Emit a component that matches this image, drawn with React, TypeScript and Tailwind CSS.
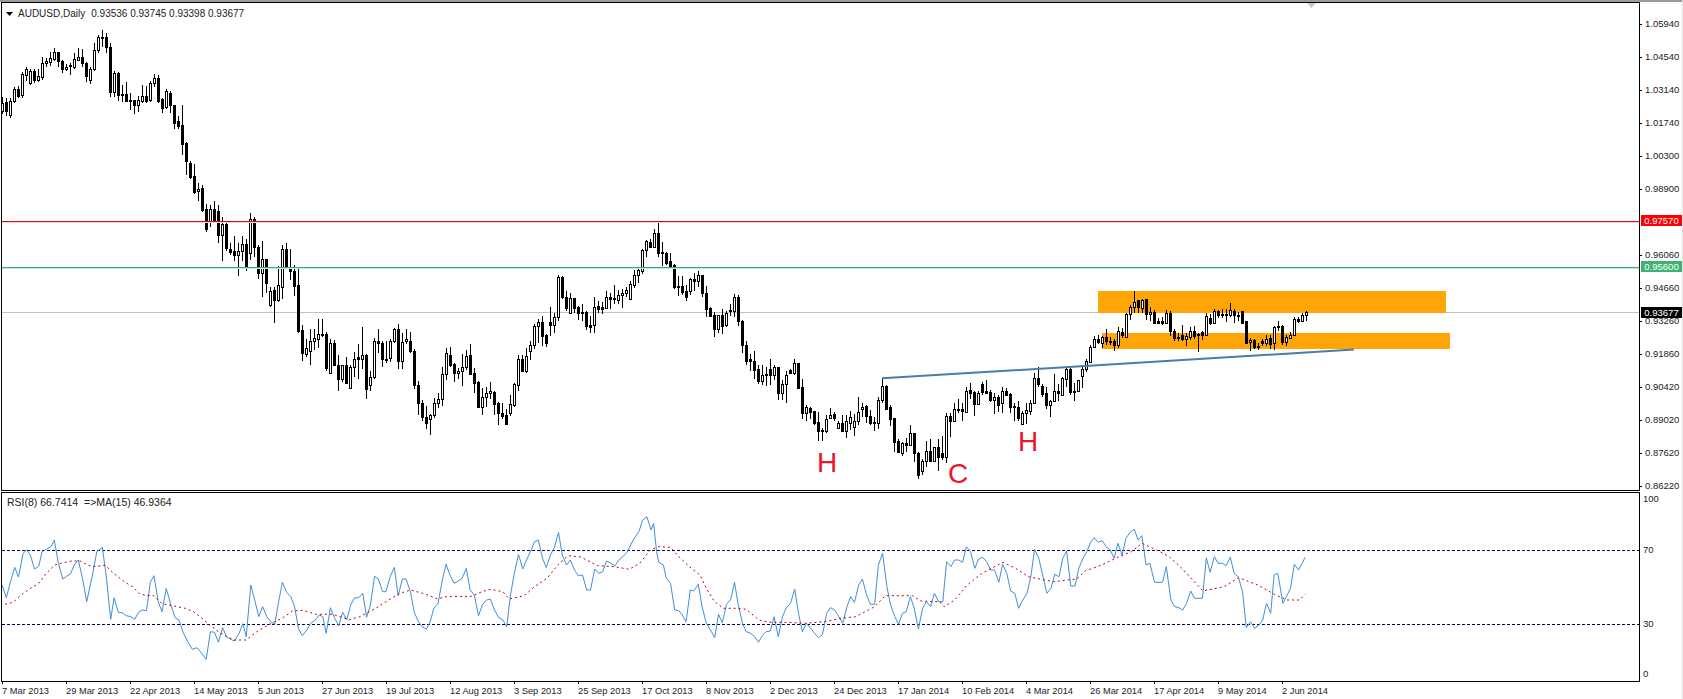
type C = [number, number, number, number, number];

const seg1: C[] = [
[218,242,200,252,1],[216,242,205,258,0],[212,254,205,264,1],[178,212,170,218,1],[178,198,168,205,0],[133,196,125,205,1],[118,134,112,152,1],[124,160,118,165,1],[122,150,116,158,0],[138,150,118,156,1],
[100,140,82,150,1],[94,100,84,112,1],[85,95,66,108,1],[67,86,55,94,1],[67,94,65,112,0],[94,118,90,128,0],[112,118,102,124,1],[106,108,100,135,0],[88,110,68,118,1],[82,90,55,94,1],
[82,100,58,112,0],[98,138,95,155,0],[116,150,110,162,1],[60,116,40,122,1],[22,60,15,70,1],[22,24,0,50,0],[22,52,8,68,0],[52,185,38,200,0],[130,185,122,200,1],[130,196,125,212,0],
[192,196,165,215,0],[192,212,155,212,0],[210,212,188,240,0],[210,224,210,252,0],[210,224,198,245,1],[198,212,166,220,1],[198,212,168,218,0],[158,210,152,215,1],[144,160,132,170,1],[144,212,136,218,0],
[208,234,205,248,0],[184,230,178,238,1],[188,226,184,250,0],[226,278,226,296,0],[274,288,258,298,0],[286,342,226,374,0],[338,392,336,434,0],[400,442,392,446,0],[438,486,402,492,0],[476,484,460,514,1],
[474,540,466,546,0],[538,598,522,606,0],[538,576,526,590,1],[538,574,514,578,0],[544,616,526,640,0],[582,616,560,692,1],[582,654,576,662,0],[658,666,640,676,0],[664,676,618,692,0],[662,676,640,738,1],
[642,664,618,692,1],[642,710,628,722,0],[566,670,550,690,1],[566,650,562,680,0],[652,728,645,748,0],[688,728,634,802,1],[688,758,688,788,0],[782,826,770,830,1],[780,810,772,878,0],[766,810,708,815,1],
[658,770,646,806,1],[658,712,640,716,0],[712,724,656,750,0],[724,768,704,798,0],[766,904,714,908,0],[900,970,886,992,0],[955,972,926,980,1],[934,962,898,1004,1],[925,934,896,960,1],[912,926,866,955,1],
[912,914,868,922,0],[912,1014,905,1024,0],[940,1028,928,1030,1],[940,1006,930,1008,0],[1006,1046,975,1082,0],[1006,1046,1004,1055,1],[1006,1060,980,1062,0],[1012,1074,1006,1078,1],[986,1012,965,1040,1],[982,988,942,1048,0],
[976,988,892,1018,1],[976,1076,972,1108,0],[1040,1064,1022,1082,1],[932,1040,924,1048,1],[932,940,898,970,0],[938,988,932,1010,0],[986,988,934,998,0],[932,984,928,995,1],[898,932,894,940,1],[898,994,882,1016,0],
[936,994,908,1016,1],[926,934,898,942,1],[932,964,905,970,0],[962,1064,958,1076,0],[1064,1120,1052,1154,0],[1120,1160,1110,1172,0],[1160,1178,1128,1198,0],[1156,1166,1152,1214,1],[1118,1156,1104,1164,1],[1108,1120,1090,1135,1],
];

const seg2: C[] = [
[492,568,470,588,1],[428,492,414,510,1],[436,466,412,472,0],[462,488,460,516,0],[482,488,474,508,1],[470,482,432,528,1],[438,470,420,480,1],[436,492,402,496,0],[490,518,474,548,0],[516,592,514,594,0],
[562,590,534,614,1],[550,562,532,590,1],[544,550,516,566,1],[546,582,544,614,0],[578,608,576,644,0],[608,618,580,628,0],[616,642,596,644,0],[582,608,556,618,1],[522,584,518,590,1],[446,524,436,542,1],
[446,484,436,486,0],[438,484,414,488,1],[406,424,394,450,1],[348,406,342,416,1],[336,348,326,400,1],[336,378,318,408,0],[374,398,372,410,0],[336,344,292,378,0],[320,344,310,368,1],[202,320,196,332,1],
[202,260,198,268,0],[260,294,244,302,0],[264,310,250,312,1],[264,294,264,308,0],[292,310,288,330,0],[306,310,282,334,0],[306,348,304,360,0],[346,350,318,370,0],[290,344,262,368,1],[288,296,272,310,0],
[292,296,275,312,0],[262,294,242,296,1],[262,266,248,296,0],[264,268,224,282,0],[256,270,240,282,1],[250,256,238,294,1],[240,250,230,260,1],[222,268,212,270,1],[196,224,180,234,1],[180,196,174,218,1],
[120,182,118,192,1],[92,120,90,142,1],[96,110,88,114,0],[70,110,56,114,1],[70,128,34,142,0],[126,130,96,168,0],[128,158,126,166,0],[154,168,128,176,0],[166,230,162,236,0],[228,232,198,258,0],
[228,246,198,254,0],[244,260,224,272,0],[208,244,204,254,1],[208,212,190,244,0],[196,212,184,230,1],[196,248,194,260,0],[248,296,228,322,0],[294,318,290,322,0],[316,356,306,380,0],[316,356,314,370,1],
[316,348,296,372,0],[310,346,302,350,1],[300,304,282,318,0],[262,302,252,320,1],[262,332,254,348,0],[332,404,330,430,0],[404,452,392,466,0],[448,454,432,482,0],[454,480,424,506,0],[478,512,466,522,0],
[496,514,464,524,1],[492,496,472,528,0],[478,494,448,526,0],[472,494,464,510,1],[470,548,470,570,0],[522,548,510,570,1],[496,522,484,578,1],[480,490,476,492,0],[460,490,448,494,1],[460,534,460,536,0],
[532,610,508,626,0],[592,610,586,632,1],[594,606,590,628,0],[604,638,602,646,0],[636,664,606,692,0],[660,664,654,692,0],[626,664,614,668,1],[614,624,594,626,1],[612,624,606,632,0],[640,654,632,658,1],
[640,662,616,666,0],[634,664,616,684,1],[620,638,602,660,1],[632,650,612,678,1],[606,632,562,644,1],[590,596,580,622,1],[588,618,584,640,0],[618,638,600,644,0],[636,638,622,662,0],[570,638,562,656,1],
];

const seg3: C[] = [
[348,390,326,398,1],[348,416,345,418,0],[412,446,406,468,0],[444,516,444,546,0],[514,546,506,548,0],[518,548,516,558,1],[520,524,504,546,0],[490,524,466,526,1],[490,550,488,576,0],[548,614,546,626,0],
[572,604,566,616,1],[542,572,514,590,1],[542,572,508,574,0],[532,572,530,576,1],[532,560,506,602,0],[550,562,498,570,0],[438,562,430,578,1],[438,452,428,500,0],[416,452,400,452,1],[416,420,388,430,0],
[418,424,400,452,0],[362,426,352,428,1],[360,368,340,386,0],[366,402,364,438,0],[368,402,362,404,1],[342,366,336,374,0],[364,368,330,372,0],[366,390,360,396,0],[382,390,370,432,1],[380,404,376,426,0],
[364,400,352,430,1],[364,374,354,378,0],[372,410,370,430,0],[408,412,400,452,0],[410,444,394,452,0],[430,462,424,466,1],[420,430,398,462,1],[398,422,390,436,1],[324,398,308,400,1],[324,342,292,352,0],
[348,372,342,380,0],[370,404,350,416,0],[394,404,390,442,1],[362,394,312,396,1],[362,368,342,392,0],[324,374,320,376,1],[296,326,292,352,1],[296,366,294,374,0],[362,366,340,392,0],[330,362,330,364,1],
[298,318,290,354,1],[274,298,266,306,1],[232,276,226,280,1],[206,232,198,234,1],[206,216,196,222,0],[202,220,198,234,1],[202,214,176,224,0],[212,216,200,226,0],[212,224,206,242,0],[184,224,170,234,1],
[186,196,174,204,0],[132,200,128,204,1],[112,132,104,150,1],[96,112,62,128,1],[90,110,90,130,0],[90,114,88,130,1],[88,132,86,150,0],[126,132,112,152,1],[126,158,120,160,0],[154,158,144,160,0],
[154,158,142,164,0],[130,158,120,160,1],[128,184,124,198,0],[184,204,176,212,0],[202,204,190,212,0],[196,208,164,214,0],[198,206,190,228,1],[184,202,172,210,1],[184,198,168,206,0],[192,196,190,246,0],
[186,194,182,210,0],[138,196,128,198,1],[144,160,132,166,0],[124,158,118,160,1],[122,134,120,144,0],[132,136,118,144,0],[132,136,116,156,0],[120,136,100,140,1],[122,136,118,160,0],[134,138,126,152,0],
[124,158,122,158,0],[154,218,152,218,0],[210,216,204,242,1],[210,232,208,238,0],[228,232,220,240,0],[214,218,208,228,0],[206,220,196,228,1],[204,222,196,236,0],[172,220,168,240,1],[168,172,152,184,0],
[168,216,166,226,0],[202,216,194,228,1],[194,204,186,208,1],[146,194,140,198,1],[148,154,142,160,0],[136,152,128,156,1],[126,136,124,152,1],
];

const rsiA = [5,240,15,278,25,230,35,187,44,216,55,145,63,135,72,150,82,192,92,184,100,140,110,133,122,124,129,105,138,170,149,222,158,214,168,206,176,180,186,165,196,220,206,290,218,220,230,140,243,127,252,210,263,343,271,278,281,322,290,323,300,332,311,335,320,343,329,322,337,315,348,317,357,232,366,212,376,290,385,320,395,250,406,300,416,338,425,345,436,385,447,412,457,433,468,428,479,445,490,463,500,380,510,382,519,412,529,368,538,395,548,403,557,408,568,385,577,356,585,395,596,240,606,290,615,335,624,305,634,335,643,350,653,358,662,290,671,232,681,262,691,275,700,305,709,370,718,392,729,375,738,355,749,345,759,330,767,335,775,385,785,308,795,340,805,362,814,322,824,345,833,300,843,278,852,278,862,265,871,337,880,300,890,214,899,222,909,260,917,260,927,215,937,187,946,272,956,222,965,222,975,260,984,320,994,350,1003,365,1013,373,1022,350,1031,310,1041,295,1051,225,1060,178,1069,210,1079,235,1089,228,1098,220,1108,190,1117,255,1127,270,1137,332,1146,300,1156,285,1165,282,1175,315,1185,338,1195,345,1204,365,1213,270,1222,205,1232,148,1242,192,1251,165,1261,138,1270,110,1279,105,1289,160,1298,188,1308,150,1317,128,1327,82,1336,150,1346,180,1355,165,1365,195,1374,212,1384,210,1394,255,1403,255,1413,192,1423,205,1432,200,1441,168,1451,175,1461,183,1470,165,1480,155,1490,142,1499,118,1508,98,1518,80,1527,45,1537,35,1547,75,1553,55,1560,140,1565,172];
const rsiB = [8,180,15,220,25,235,35,315,45,317,53,330,62,350,72,255,80,258,91,238,100,305,110,355,120,375,130,398,139,328,148,353,158,298,168,283,177,232,186,300,196,355,205,380,215,385,225,395,234,412,244,390,252,380,262,378,271,335,281,395,291,335,300,308,310,295,320,252,329,325,338,380,348,355,358,370,367,385,377,398,386,388,396,325,405,308,415,315,425,335,434,355,444,305,453,275,462,292,472,240,481,222,491,270,500,298,510,298,519,180,529,145,539,245,548,300,558,335,567,358,576,325,585,320,595,275,604,310,614,372,624,310,633,290,643,305,652,265,662,290,672,290,681,170,691,185,700,165,709,165,719,172,728,125,738,140,748,190,757,162,767,157,776,170,786,195,795,195,805,232,814,178,824,205,833,258,843,265,852,310,862,285,872,265,881,215,890,133,900,160,910,215,919,265,929,250,938,208,948,215,957,160,966,138,976,243,986,243,995,190,1005,160,1014,140,1023,112,1032,98,1041,112,1051,107,1060,125,1070,135,1079,160,1088,115,1098,150,1107,100,1117,82,1127,73,1136,105,1145,92,1155,180,1164,175,1175,232,1194,232,1203,185,1214,285,1223,305,1233,308,1242,315,1251,295,1261,258,1270,280,1289,280,1298,158,1307,202,1317,155,1326,175,1336,175,1345,182,1355,157,1364,205,1374,215,1384,260,1393,368,1403,350,1413,370,1422,362,1432,345,1441,295,1451,325,1459,210,1468,205,1480,295,1498,250,1507,178,1517,195,1533,157];
const maA = [0,298,20,297,35,288,50,270,70,252,92,235,110,205,130,180,150,173,170,168,190,168,205,178,220,185,250,181,270,205,295,230,315,245,330,265,345,271,365,272,385,296,410,302,440,310,460,320,480,340,500,362,525,385,555,405,585,405,610,380,640,358,670,340,695,318,720,316,750,328,790,328,830,344,855,335,890,312,920,288,950,265,975,255,1005,265,1040,282,1060,275,1120,274,1145,260,1165,253,1195,260,1210,282,1245,272,1270,245,1300,220,1325,180,1350,152,1380,156,1420,182,1460,185,1495,193,1520,175,1545,135,1565,125];
const maB = [25,127,45,155,70,185,95,210,110,250,130,290,150,310,180,310,205,313,235,345,260,352,300,352,345,355,390,350,430,340,465,335,510,305,535,272,560,272,600,272,620,288,665,290,675,305,700,285,730,240,765,205,815,172,845,190,875,215,935,230,990,222,1010,198,1050,180,1090,155,1120,140,1145,115,1180,135,1210,155,1240,190,1290,258,1340,245,1375,218,1420,240,1460,268,1490,285,1520,285,1533,268];

function toPts(a: number[], b: number[]) {
  const out: string[] = [];
  const push = (arr: number[], xo: number) => {
    for (let i = 0; i < arr.length; i += 2) {
      out.push(`${(xo + arr[i] / 2.376).toFixed(1)},${(505 + arr[i + 1] / 3).toFixed(1)}`);
    }
  };
  push(a, 0);
  push(b, 660);
  return out.join(" ");
}

const candles = [
  ...seg1.map((c) => ({ c, off: 30 })),
  ...seg2.map((c) => ({ c, off: 210 })),
  ...seg3.map((c) => ({ c, off: 270 })),
];

function Candle({ c, off, i }: { c: C; off: number; i: number }) {
  const y = (z: number) => Math.round(off + z / 3);
  const cx = 2.5 + 4 * i;
  const t = y(c[0]);
  const b = Math.max(y(c[1]), t + 1);
  return (
    <g shapeRendering="crispEdges">
      <line x1={cx} x2={cx} y1={y(c[2])} y2={y(c[3])} stroke="#000" />
      {c[4] ? (
        <rect x={cx - 1} y={t + 0.5} width={2} height={b - t} fill="#fff" stroke="#000" />
      ) : (
        <rect x={cx - 1.5} y={t} width={3} height={b - t + 1} fill="#000" />
      )}
    </g>
  );
}

const prices = ["1.05940","1.04540","1.03140","1.01740","1.00300","0.98900","","0.96060","0.94660","0.93260","0.91860","0.90420","0.89020","0.87620","0.86220"];
const dates = ["7 Mar 2013","29 Mar 2013","22 Apr 2013","14 May 2013","5 Jun 2013","27 Jun 2013","19 Jul 2013","12 Aug 2013","3 Sep 2013","25 Sep 2013","17 Oct 2013","8 Nov 2013","2 Dec 2013","24 Dec 2013","17 Jan 2014","10 Feb 2014","4 Mar 2014","26 Mar 2014","17 Apr 2014","9 May 2014","2 Jun 2014"];

const rsiPts = toPts(rsiA, rsiB);
const maPts = toPts(maA, maB);

export default function App() {
  return (
    <div className="relative flex h-[699px] w-[1683px] flex-col overflow-hidden bg-white font-['Liberation_Sans',sans-serif] text-[9.5px] leading-none text-[#222]">
      <div className="h-[2px] shrink-0 bg-[#9a9a9a]" />
      <div className="flex h-[489px] shrink-0 pl-px">
        <div className="relative h-full w-[1639px] shrink-0 border border-black">
          <svg className="block h-[487px] w-[1637px]" viewBox="2 3 1637 487">
            <line x1="2" x2="1639" y1="312.5" y2="312.5" stroke="#c0c0c0" shapeRendering="crispEdges" />
            <polygon points="1307,3 1316,3 1311.5,8" fill="#c8c8c8" />
            <rect x="1098" y="291" width="348" height="22" fill="#ffa505" />
            <rect x="1102" y="333" width="348" height="16" fill="#ffa505" />
            {candles.map((d, i) => (
              <Candle key={i} c={d.c} off={d.off} i={i} />
            ))}
            <line x1="2" x2="1639" y1="222.5" y2="222.5" stroke="#f8d0d4" shapeRendering="crispEdges" />
            <line x1="2" x2="1639" y1="221.5" y2="221.5" stroke="#c8102a" shapeRendering="crispEdges" />
            <line x1="2" x2="1639" y1="268.5" y2="268.5" stroke="#c4e4d8" shapeRendering="crispEdges" />
            <line x1="2" x2="1639" y1="267.5" y2="267.5" stroke="#3da880" shapeRendering="crispEdges" />
            <line x1="882" y1="378.3" x2="1354" y2="349.6" stroke="#4b7da8" strokeWidth="2" />
            <text x="817" y="472" className="fill-[#e8182c] text-[28px]">H</text>
            <text x="948" y="482.5" className="fill-[#e8182c] text-[28px]">C</text>
            <text x="1018" y="451" className="fill-[#e8182c] text-[28px]">H</text>
          </svg>
          <div className="absolute left-[4px] top-[6px] flex items-center whitespace-nowrap text-[10px]">
            <svg className="mr-[5px] h-[4px] w-[7px]" viewBox="0 0 7 4">
              <polygon points="0,0 7,0 3.5,4" fill="#000" />
            </svg>
            <span className="mr-[6px]">AUDUSD,Daily</span>
            <span>0.93536 0.93745 0.93398 0.93677</span>
          </div>
        </div>
        <div className="relative w-[42px] shrink-0 pt-[5.5px]">
          {prices.map((p, i) => (
            <div key={i} className="flex h-[33px] items-center whitespace-nowrap">
              {p && <div className="h-px w-[2px] bg-black" />}
              {p && <span className="ml-[3px]">{p}</span>}
            </div>
          ))}
          <div className="absolute left-px top-[213px] flex h-[11px] w-[41px] items-center justify-center bg-[#ff0000] text-white">0.97570</div>
          <div className="absolute left-px top-[259px] flex h-[11px] w-[41px] items-center justify-center bg-[#3cb371] text-white">0.95600</div>
          <div className="absolute left-px top-[305px] flex h-[11px] w-[41px] items-center justify-center bg-black text-white">0.93677</div>
        </div>
      </div>
      <div className="h-px shrink-0" />
      <div className="flex h-[190px] shrink-0 pl-px">
        <div className="relative h-full w-[1639px] shrink-0 border border-black">
          <svg className="block h-[188px] w-[1637px]" viewBox="2 493 1637 188">
            <line x1="2" x2="1639" y1="550.5" y2="550.5" stroke="#000050" strokeDasharray="3 2" shapeRendering="crispEdges" />
            <line x1="2" x2="1639" y1="624.5" y2="624.5" stroke="#000050" strokeDasharray="3 2" shapeRendering="crispEdges" />
            <polyline points={rsiPts} fill="none" stroke="#3f8fd8" strokeWidth="1" />
            <polyline points={maPts} fill="none" stroke="#b80020" strokeWidth="1" strokeDasharray="2 3" />
          </svg>
          <div className="absolute left-[5px] top-[4px] whitespace-pre text-[10.5px]">{"RSI(8) 66.7414  =>MA(15) 46.9364"}</div>
        </div>
        <div className="flex flex-col pl-[3px]">
          <div className="flex h-[14px] items-center">100</div>
          <div className="mt-[37px] flex h-[14px] items-center">70</div>
          <div className="mt-[60px] flex h-[14px] items-center">30</div>
          <div className="mt-[36px] flex h-[14px] items-center">0</div>
        </div>
      </div>
      <div className="flex pl-[2px]">
        {dates.map((d) => (
          <div key={d} className="w-[64px] shrink-0 whitespace-nowrap">
            <div className="h-[2px] w-px bg-black" />
            <div className="mt-[3px] text-[9.3px]">{d}</div>
          </div>
        ))}
      </div>
      <div className="absolute right-0 top-0 h-full w-px bg-[#e4e4e4]" />
    </div>
  );
}
